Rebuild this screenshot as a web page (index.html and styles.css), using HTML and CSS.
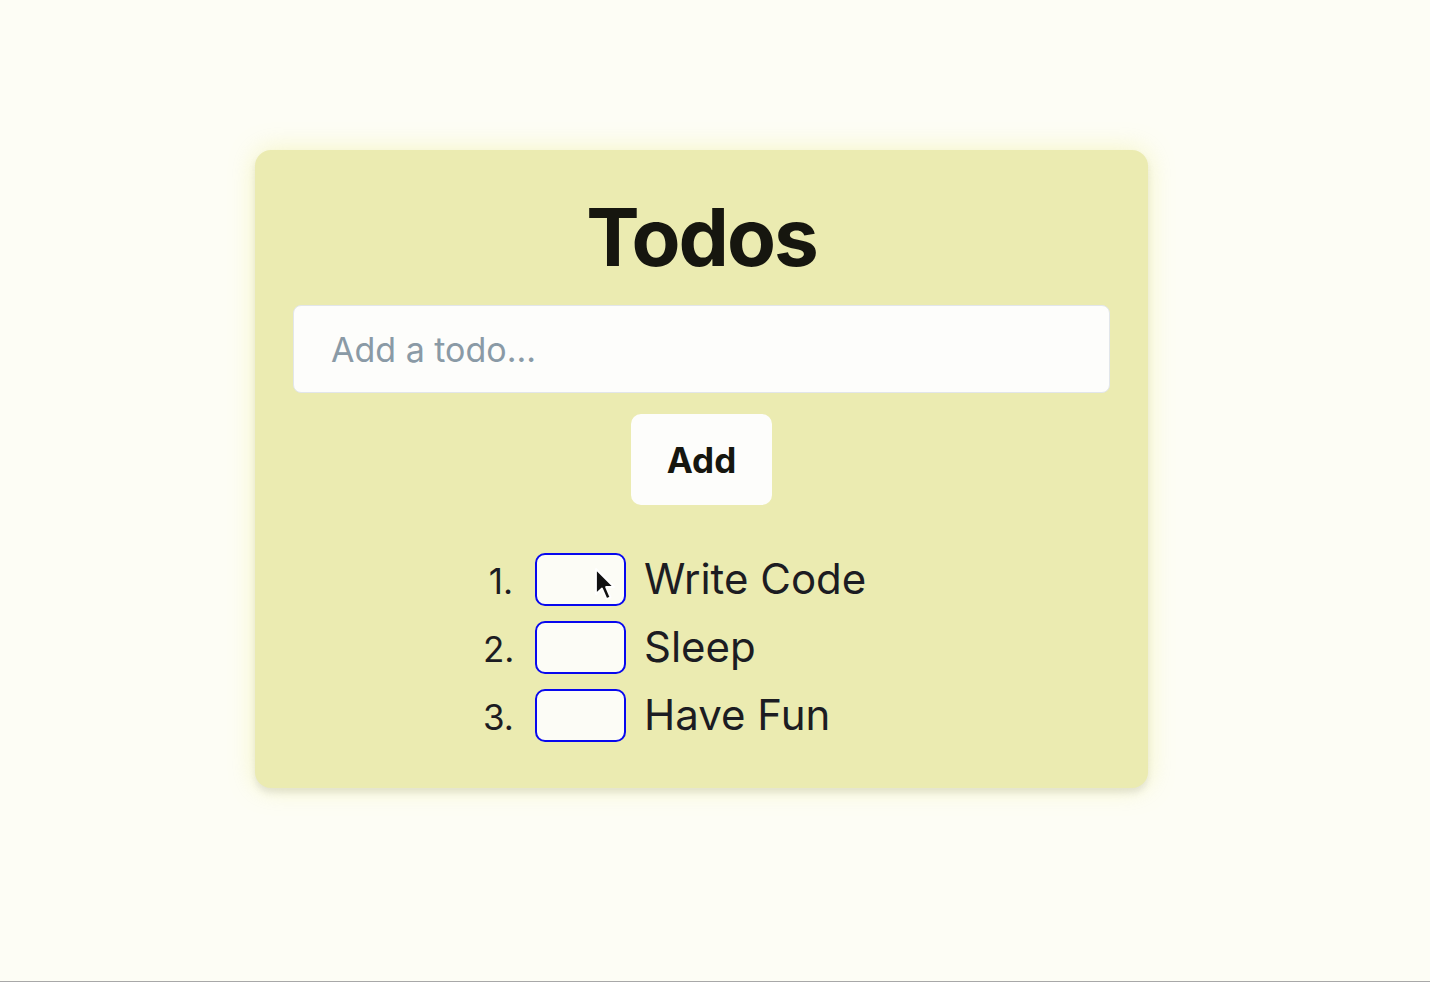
FILE: index.html
```html
<!DOCTYPE html>
<html lang="en">
<head>
<meta charset="utf-8">
<title>Todos</title>
<link rel="stylesheet" href="styles.css">
</head>
<body>
<div class="page">
  <main class="card">
    <h1 class="title">Todos</h1>
    <input class="todo-input" type="text" placeholder="Add a todo...">
    <button class="add-btn" type="button">Add</button>
    <ol class="todo-list">
      <li class="todo-item">
        <span class="num">1.</span>
        <span class="box box-hover">
          <svg class="cursor" width="24" height="36" viewBox="0 0 24 36">
            <path d="M3 2 L3 27 L9 21.5 L13.5 32 L17.5 30.3 L13 20 L21 20 Z" fill="#111" stroke="#fff" stroke-width="1.8" stroke-linejoin="round"/>
          </svg>
        </span>
        <span class="label">Write Code</span>
      </li>
      <li class="todo-item">
        <span class="num">2.</span>
        <span class="box"></span>
        <span class="label">Sleep</span>
      </li>
      <li class="todo-item">
        <span class="num">3.</span>
        <span class="box"></span>
        <span class="label">Have Fun</span>
      </li>
    </ol>
  </main>
</div>
</body>
</html>
```

FILE: styles.css
```css
* { box-sizing: border-box; }

html, body {
  margin: 0;
  padding: 0;
}

body {
  background: #fdfdf5;
  font-family: Inter, "Noto Sans", "Liberation Sans", sans-serif;
  color: #1c1c22;
}

.page {
  height: 982px;
  padding-top: 150px;
  padding-left: 255px;
  border-bottom: 1px solid #a8a8a8;
}

.card {
  width: 893px;
  height: 638px;
  background: #ebebb1;
  border-radius: 16px;
  padding: 47px 38px 39px 38px;
  display: flex;
  flex-direction: column;
  align-items: center;
  box-shadow: 0 5px 6px rgba(120, 120, 120, 0.16), 0 0 26px rgba(236, 236, 120, 0.4);
}

.title {
  margin: 0;
  font-size: 80px;
  line-height: 80px;
  font-weight: 700;
  letter-spacing: -0.025em;
  color: #16160f;
}

.todo-input {
  margin-top: 28px;
  width: 100%;
  height: 88px;
  border: 1px solid #e2e6ea;
  border-radius: 8px;
  background: #fdfdfb;
  padding: 0 37px;
  font-family: inherit;
  font-size: 34px;
  color: #1c1c22;
  outline: none;
}

.todo-input::placeholder {
  color: #8a9aa6;
}

.add-btn {
  margin-top: 21px;
  width: 141px;
  height: 91px;
  border: none;
  border-radius: 10px;
  background: #fdfdfb;
  font-family: inherit;
  font-size: 35px;
  font-weight: 700;
  color: #16160f;
  padding: 0;
}

.todo-list {
  list-style: none;
  margin: 40px 0 0 190px;
  padding: 0;
  align-self: flex-start;
}

.todo-item {
  height: 68px;
  display: flex;
  align-items: center;
}

.num {
  width: 30px;
  text-align: right;
  font-size: 35px;
  line-height: 35px;
  padding-top: 5px;
  margin-right: 22px;
}

.box {
  width: 91px;
  height: 53px;
  border: 2px solid #0808ee;
  border-radius: 10px;
  background: #fcfcf6;
  position: relative;
}

.cursor {
  position: absolute;
  left: 56px;
  top: 12px;
}

.label {
  margin-left: 18px;
  font-size: 42px;
  line-height: 42px;
}
```
